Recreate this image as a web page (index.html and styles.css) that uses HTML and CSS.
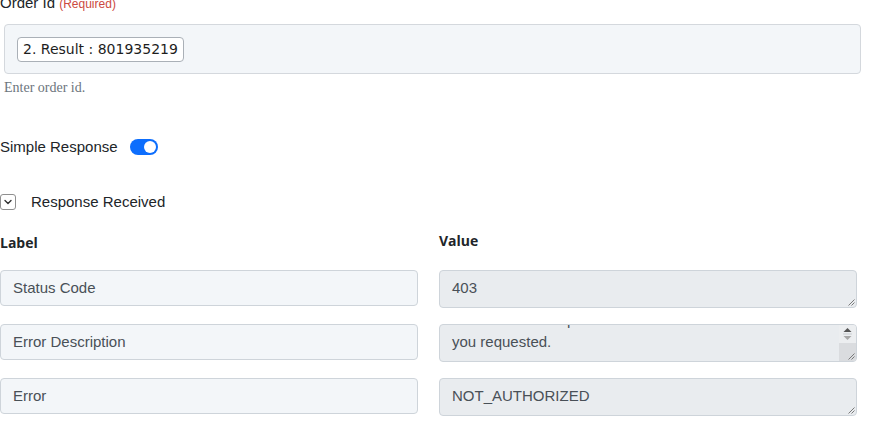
FILE: index.html
```html
<!DOCTYPE html>
<html lang="en">
<head>
<meta charset="utf-8">
<title>Order lookup</title>
<link rel="stylesheet" href="styles.css">
</head>
<body>
<div class="page">
  <div class="field">
    <div class="field-label">Order Id <span class="req">(Required)</span></div>
    <div class="token-box"><span class="token">2. Result : 801935219</span></div>
    <div class="hint">Enter order id.</div>
  </div>

  <div class="switch-row">
    <span>Simple Response</span>
    <span class="switch" role="switch" aria-checked="true"></span>
  </div>

  <div class="collapse-row">
    <span class="chev">
      <svg width="10" height="10" viewBox="0 0 10 10"><path d="M2 3.5L5 6.5L8 3.5" fill="none" stroke="#333" stroke-width="1.4" stroke-linecap="round" stroke-linejoin="round"/></svg>
    </span>
    <span>Response Received</span>
  </div>

  <div class="grid">
    <div class="head head-label">Label</div>
    <div class="head">Value</div>

    <div class="cell label-cell">Status Code</div>
    <div class="cell value-cell">403
      <svg class="grip" width="9" height="9" viewBox="0 0 9 9"><path d="M8.5 2.5L2.5 8.5M8.5 5.5L5.5 8.5" stroke="#7a7a7a" stroke-width="1"/></svg>
    </div>

    <div class="cell label-cell">Error Description</div>
    <div class="cell value-cell value-scroll">
      <div class="lines">
        <div class="line">The token has expired or is not valid for the resource</div>
        <div class="line">you requested.</div>
      </div>
      <div class="scrollbar">
        <div class="spin">
          <svg width="9" height="14" viewBox="0 0 9 14"><path d="M0.5 5L4.5 1L8.5 5Z" fill="#555"/><path d="M0 7H9" stroke="#c9cdd1" stroke-width="1"/><path d="M0.5 9L4.5 13L8.5 9Z" fill="#a8a8a8"/></svg>
        </div>
        <div class="track"></div>
      </div>
      <svg class="grip" width="9" height="9" viewBox="0 0 9 9"><path d="M8.5 2.5L2.5 8.5M8.5 5.5L5.5 8.5" stroke="#7a7a7a" stroke-width="1"/></svg>
    </div>

    <div class="cell label-cell">Error</div>
    <div class="cell value-cell">NOT_AUTHORIZED
      <svg class="grip" width="9" height="9" viewBox="0 0 9 9"><path d="M8.5 2.5L2.5 8.5M8.5 5.5L5.5 8.5" stroke="#7a7a7a" stroke-width="1"/></svg>
    </div>
  </div>
</div>
</body>
</html>
```
FILE: styles.css
```css
* {
  box-sizing: border-box;
}

body {
  margin: 0;
  background: #fff;
  font-family: "Liberation Sans", Arial, sans-serif;
  color: #212529;
}

.page {
  width: 861px;
  margin-top: -7px;
}

/* Order id field */
.field-label {
  font-size: 15px;
  line-height: 20px;
}

.req {
  color: #cc4a3f;
  font-size: 12px;
}

.token-box {
  margin: 10px 0 0 4px;
  width: 857px;
  height: 50px;
  padding: 12px;
  background: #f3f6f9;
  border: 1px solid #d4d8dd;
  border-radius: 4px;
}

.token {
  display: inline-block;
  height: 25px;
  padding: 0 5px;
  line-height: 23px;
  background: #fff;
  border: 1px solid #aab0b7;
  border-radius: 4px;
  font-family: "DejaVu Sans", sans-serif;
  font-size: 14px;
  color: #1e1e1e;
}

.hint {
  margin: 5px 0 0 4px;
  font-family: "Liberation Serif", serif;
  font-size: 14px;
  line-height: 17px;
  color: #6c757d;
}

/* Simple response toggle */
.switch-row {
  margin-top: 41px;
  display: flex;
  align-items: center;
  gap: 12px;
  font-size: 15px;
  line-height: 20px;
}

.switch {
  position: relative;
  width: 28px;
  height: 16px;
  border-radius: 8px;
  background: #0d6efd;
}

.switch::after {
  content: "";
  position: absolute;
  right: 2px;
  top: 2px;
  width: 12px;
  height: 12px;
  border-radius: 50%;
  background: #fff;
}

/* Collapsible section header */
.collapse-row {
  margin-top: 35px;
  display: flex;
  align-items: center;
  gap: 15px;
  font-size: 15px;
  line-height: 20px;
}

.chev {
  width: 16px;
  height: 16px;
  border: 1px solid #8f8f8f;
  border-radius: 3px;
  display: flex;
  align-items: center;
  justify-content: center;
}

/* Response table */
.grid {
  margin-top: 19px;
  width: 857px;
  display: grid;
  grid-template-columns: 418px 418px;
  column-gap: 21px;
  row-gap: 16px;
  align-items: start;
}

.head {
  height: 23px;
  font-family: "Open Sans", sans-serif;
  font-weight: 700;
  font-size: 14px;
  line-height: 20px;
  color: #212529;
}

.head-label {
  padding-top: 2px;
}

.cell {
  border: 1px solid #ced4da;
  border-radius: 4px;
  font-size: 15px;
  color: #495057;
}

.label-cell {
  height: 36px;
  padding: 0 12px;
  line-height: 34px;
  background: #f3f6f9;
}

.value-cell {
  position: relative;
  height: 38px;
  padding: 6px 12px 8px;
  line-height: 22px;
  background: #e9ecef;
  overflow: hidden;
}

.value-scroll {
  padding-right: 30px;
}

.lines {
  margin-top: -22px;
}

.line {
  white-space: nowrap;
}

.grip {
  position: absolute;
  right: 1px;
  bottom: 1px;
}

/* Textarea scrollbar with spin arrows */
.scrollbar {
  position: absolute;
  top: 0;
  right: 0;
  bottom: 0;
  width: 17px;
  display: flex;
  flex-direction: column;
}

.spin {
  height: 18px;
  display: flex;
  align-items: center;
  justify-content: center;
  background: #eceef0;
}

.track {
  flex: 1;
  background: #dadcdf;
}
```
